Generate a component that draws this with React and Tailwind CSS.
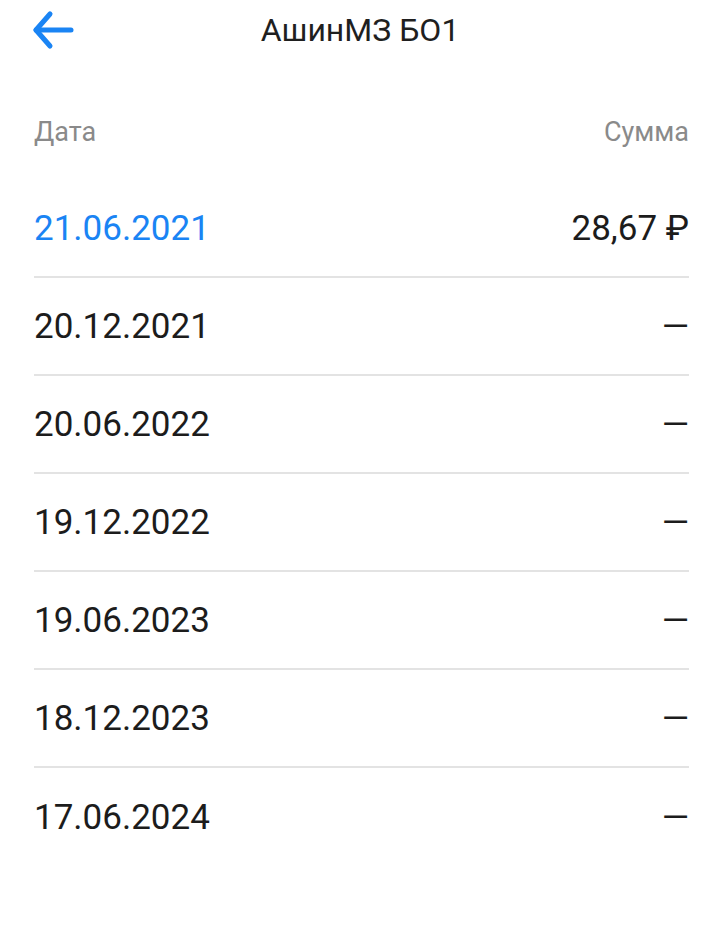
import React from "react";

const rows = [
  { date: "21.06.2021", sum: "28,67 ₽", active: true },
  { date: "20.12.2021", sum: "—" },
  { date: "20.06.2022", sum: "—" },
  { date: "19.12.2022", sum: "—" },
  { date: "19.06.2023", sum: "—" },
  { date: "18.12.2023", sum: "—" },
  { date: "17.06.2024", sum: "—" },
];

export default function App() {
  return (
    <div
      className="w-[707px] h-[942px] bg-white overflow-hidden"
      style={{ fontFamily: "Roboto, 'Noto Sans', sans-serif" }}
    >
      <div className="relative h-[60px] flex items-center justify-center pl-[13px]">
        <svg
          className="absolute left-[31px] top-[10px]"
          width="46"
          height="40"
          viewBox="0 0 46 40"
          fill="none"
          stroke="#1a84f4"
          strokeWidth="5"
          strokeLinecap="round"
          strokeLinejoin="round"
        >
          <path d="M40 20H5" />
          <path d="M19 4L5 20L19 36" />
        </svg>
        <span className="text-[32px] text-[#1f1f1f] leading-none">АшинМЗ БО1</span>
      </div>
      <div className="pl-[34px] pr-[18px] pt-[44px]">
        <div className="flex justify-between items-center h-[56px] text-[27px] text-[#8a8a8a] leading-none">
          <span>Дата</span>
          <span>Сумма</span>
        </div>
        <div className="mt-[20px]">
          {rows.map((r, i) => (
            <div
              key={i}
              className={`flex justify-between items-center h-[98px] ${
                i < rows.length - 1 ? "border-b-2 border-[#e3e3e3]" : ""
              }`}
            >
              <span
                className={`text-[35px] leading-none ${
                  r.active ? "text-[#1a84f4]" : "text-[#1c1c1c]"
                }`}
              >
                {r.date}
              </span>
              <span className="text-[35px] leading-none text-[#1c1c1c]">{r.sum}</span>
            </div>
          ))}
        </div>
      </div>
    </div>
  );
}
